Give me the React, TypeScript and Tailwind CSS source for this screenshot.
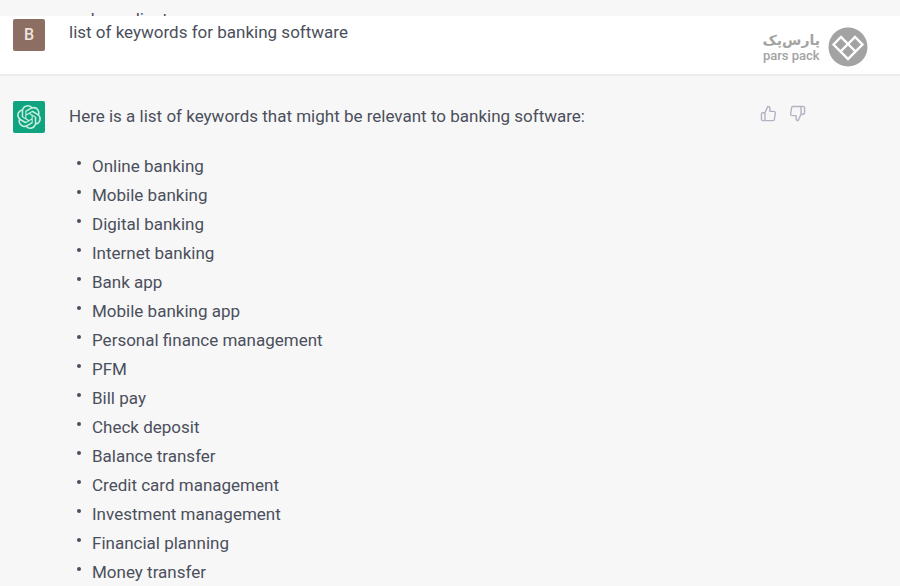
import { FiThumbsDown, FiThumbsUp } from 'react-icons/fi';
import { SiOpenai } from 'react-icons/si';

const keywords = [
  'Online banking',
  'Mobile banking',
  'Digital banking',
  'Internet banking',
  'Bank app',
  'Mobile banking app',
  'Personal finance management',
  'PFM',
  'Bill pay',
  'Check deposit',
  'Balance transfer',
  'Credit card management',
  'Investment management',
  'Financial planning',
  'Money transfer',
];

export default function App() {
  return (
    <main className="h-screen overflow-hidden bg-[#f7f7f7] font-['Roboto',sans-serif] text-[17px] leading-[29px] text-[#4b4f5c]">
      {/* end of the previous message, scrolled almost out of view */}
      <div className="h-4 overflow-hidden pt-[5px] pl-[69px]">
        <p>web as client</p>
      </div>

      <section className="flex items-start border-b-2 border-[#ececec] bg-white pt-[3px] pr-8 pb-[7px] pl-[13px]">
        <Avatar className="bg-[#8d6e63]">
          <span className="text-base font-medium text-[#f1e4df]">B</span>
        </Avatar>
        <p className="ml-6 flex-1 leading-[27px]">list of keywords for banking software</p>
        <Brand />
      </section>

      <section className="flex items-start pt-[25px] pr-[94px] pl-[13px]">
        <Avatar className="bg-[#10a37f]">
          <SiOpenai className="size-6 text-[#c5eedd]" />
        </Avatar>
        <div className="ml-6 flex-1">
          <p className="leading-[31px]">Here is a list of keywords that might be relevant to banking software:</p>
          <ul className="mt-5">
            {keywords.map((keyword) => (
              <li key={keyword} className="flex items-start">
                <span className="mt-[9px] mr-[11px] ml-2 size-1 rounded-full bg-[#4b4f5c]" />
                {keyword}
              </li>
            ))}
          </ul>
        </div>
        <div className="mt-1 flex gap-3 text-[#b3b3c4]">
          <button aria-label="Good response">
            <FiThumbsUp className="size-[17px]" />
          </button>
          <button aria-label="Bad response">
            <FiThumbsDown className="size-[17px]" />
          </button>
        </div>
      </section>
    </main>
  );
}

function Avatar({ className, children }: any) {
  return (
    <div className={`flex size-8 shrink-0 items-center justify-center rounded-xs ${className}`}>
      {children}
    </div>
  );
}

function Brand() {
  return (
    <div className="mt-2 flex items-center gap-2 text-[#a3a3a3]">
      <div className="flex flex-col items-center">
        <span lang="fa" dir="rtl" className="font-['DejaVu_Sans',sans-serif] text-sm leading-[18px] font-bold">
          پارس‌پک
        </span>
        <span className="text-[13px] leading-[14px] font-medium">pars pack</span>
      </div>
      <svg viewBox="0 0 40 40" className="size-10">
        <circle cx="20" cy="20" r="19.5" fill="#a3a3a3" />
        <path
          d="M5.5 17.5L13 10L20 17L27 10L34.5 17.5L20 32ZM20 17L27.5 24.5M20 17L12.5 24.5"
          fill="none"
          stroke="#fff"
          strokeWidth="2.4"
        />
      </svg>
    </div>
  );
}
